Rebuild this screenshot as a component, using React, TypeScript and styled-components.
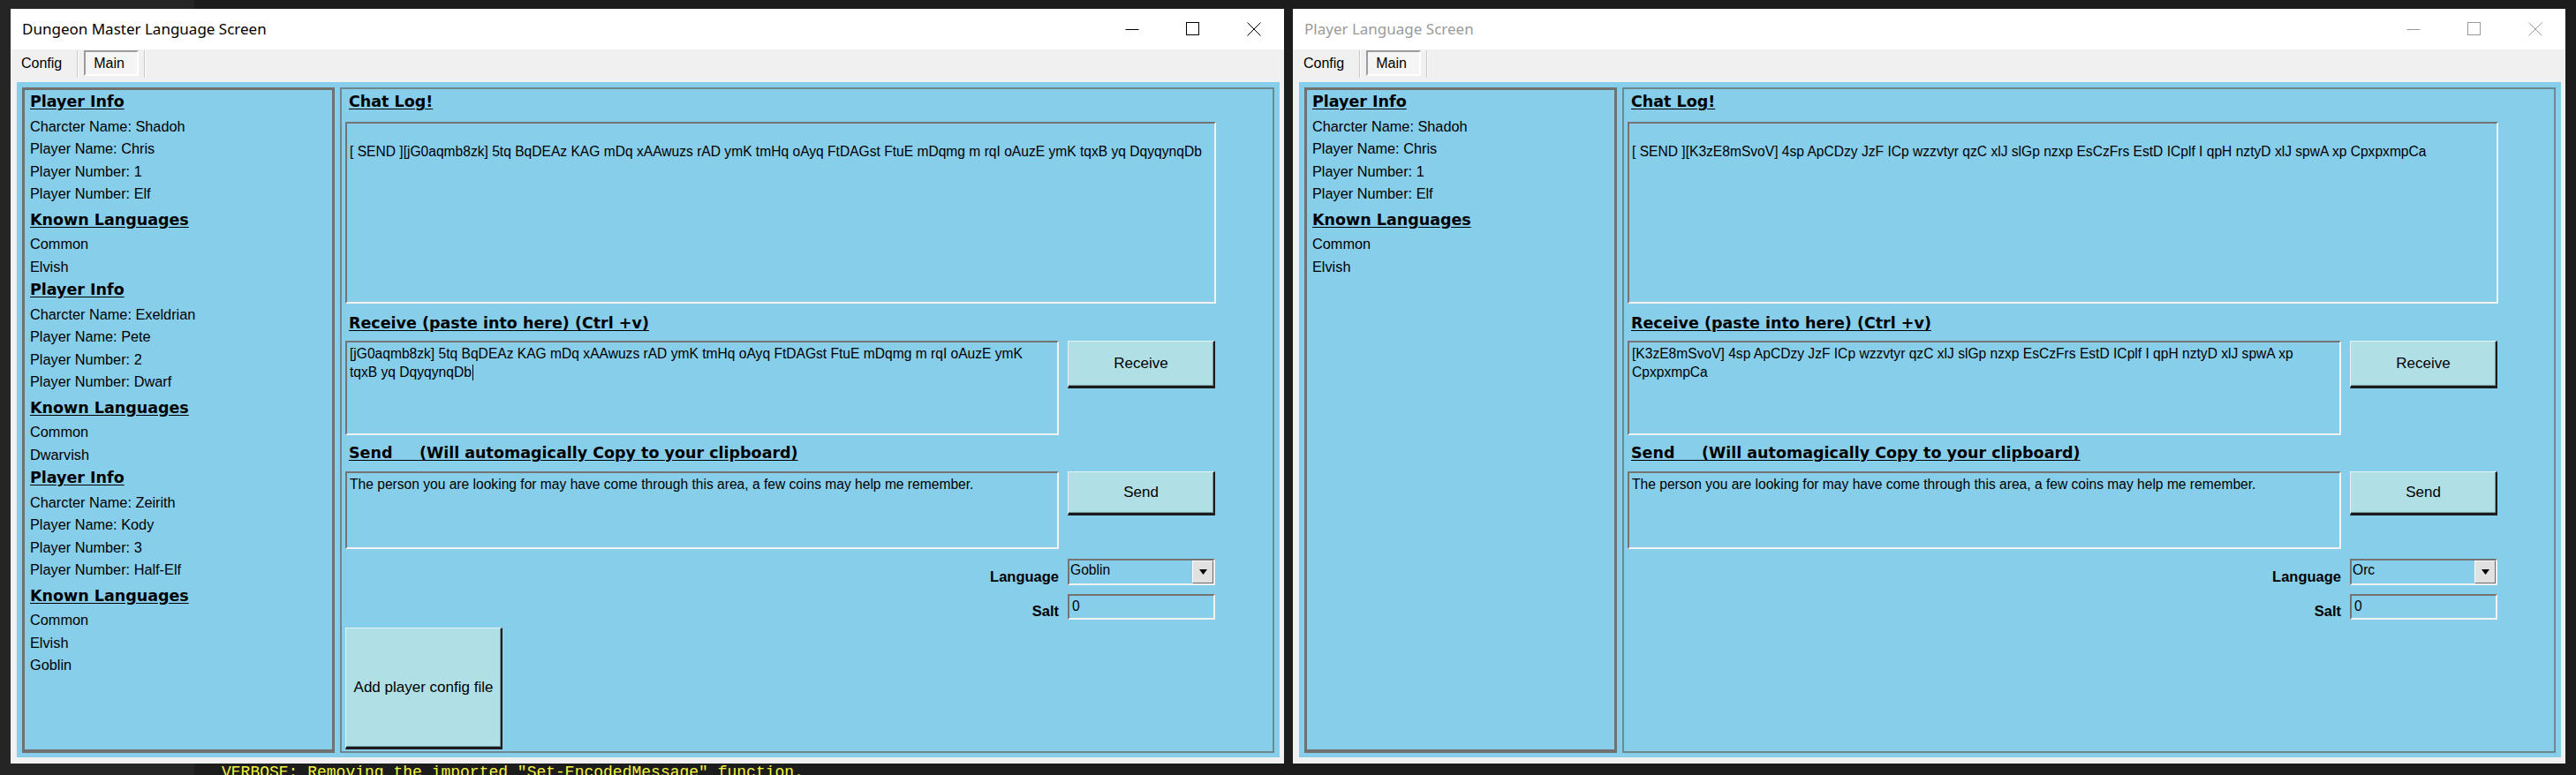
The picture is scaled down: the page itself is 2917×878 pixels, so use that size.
import styled, { createGlobalStyle, css } from 'styled-components';

interface Player {
    character: string;
    name: string;
    number: number;
    race: string;
    languages: string[];
}

interface ScreenProps {
    title: string;
    active: boolean;
    width: number;
    players: Player[];
    chat: string;
    received: string[];
    sendText: string;
    language: string;
    showCaret?: boolean;
    showAddButton?: boolean;
}

const GlobalStyle = createGlobalStyle`
    html, body {
        margin: 0;
        padding: 0;
    }
    body {
        width: 2917px;
        height: 878px;
        overflow: hidden;
        background: #1c1c1c;
        font-family: "Liberation Sans", Arial, sans-serif;
    }
`;

const Desktop = styled.div`
    width: 2917px;
    height: 878px;
    overflow: hidden;
    display: flex;
    flex-direction: column;
    background: linear-gradient(to right, #252526 0 220px, #1c1c1c 220px);
`;

const TopStrip = styled.div`
    height: 10px;
    flex-shrink: 0;
`;

const WindowRow = styled.div`
    display: flex;
    gap: 10px;
    padding-left: 12px;
    flex-shrink: 0;
`;

const Window = styled.div<{ $width: number }>`
    width: ${p => p.$width}px;
    height: 855px;
    display: flex;
    flex-direction: column;
    background: #f0f0f0;
`;

const TitleBar = styled.div<{ $active: boolean }>`
    height: 46px;
    flex-shrink: 0;
    display: flex;
    align-items: center;
    padding-left: 13px;
    background: #ffffff;
    color: ${p => (p.$active ? '#000000' : '#9a9a9a')};
    font-family: "Noto Sans", "Open Sans", sans-serif;
    font-size: 17px;
`;

const TitleText = styled.span`
    flex: 1;
    margin-top: -2px;
`;

const CaptionButton = styled.div`
    width: 69px;
    height: 46px;
    display: flex;
    align-items: center;
    justify-content: center;
`;

const MenuStrip = styled.div`
    height: 37px;
    flex-shrink: 0;
    box-sizing: border-box;
    display: flex;
    align-items: flex-start;
    padding: 1px 0 0 12px;
    font-size: 16px;
    color: #000000;
`;

const MenuItem = styled.div<{ $checked?: boolean }>`
    height: 29px;
    box-sizing: border-box;
    display: flex;
    align-items: center;
    ${p =>
        p.$checked
            ? css`
                  width: 62px;
                  padding-left: 9px;
                  border: 2px solid;
                  border-color: #9c9c9c #ffffff #ffffff #9c9c9c;
                  background: #f5f5f5;
              `
            : css`
                  padding-right: 11px;
              `}
`;

const MenuSeparator = styled.div`
    width: 1px;
    height: 31px;
    background: #c8c8c8;
    border-right: 1px solid #ffffff;
    margin: 0 6px;
`;

const Content = styled.div`
    flex: 1;
    min-height: 0;
    margin: 0 5px 7px 7px;
    padding: 6px 6px 5px 6px;
    display: flex;
    gap: 6px;
    background: #87ceeb;
`;

const PlayerPanel = styled.div`
    width: 354px;
    flex-shrink: 0;
    box-sizing: border-box;
    border: 3px solid #707070;
    border-bottom-width: 4px;
    padding-left: 6px;
    color: #000000;
`;

const PanelHeading = styled.div`
    font-family: "DejaVu Sans", Verdana, sans-serif;
    font-weight: bold;
    font-size: 17.5px;
    line-height: 25.5px;
    text-decoration: underline;
    text-underline-offset: 2px;
    margin: 4px 0 2px;

    &:first-child {
        margin-top: 1px;
    }
`;

const InfoLine = styled.div`
    font-size: 16.3px;
    line-height: 25.5px;
`;

const FormPanel = styled.div`
    flex: 1;
    box-sizing: border-box;
    border: 2px solid #6f8790;
    padding: 2px 0 0 4px;
    display: flex;
    flex-direction: column;
    align-items: flex-start;
    color: #000000;
`;

const SectionTitle = styled.div<{ $top?: number }>`
    font-family: "DejaVu Sans", Verdana, sans-serif;
    font-weight: bold;
    font-size: 17.5px;
    line-height: 24px;
    text-decoration: underline;
    text-underline-offset: 2px;
    white-space: pre;
    margin: ${p => p.$top ?? 0}px 0 0 4px;
`;

const FormRow = styled.div<{ $top: number }>`
    display: grid;
    grid-template-columns: 808px 167px;
    column-gap: 10px;
    align-items: start;
    margin-top: ${p => p.$top}px;
`;

const TextBox = styled.div<{ $height: number; $wide?: boolean }>`
    box-sizing: border-box;
    height: ${p => p.$height}px;
    width: ${p => (p.$wide ? '986px' : '100%')};
    border: 2px solid;
    border-color: #747474 #f2f2f2 #f2f2f2 #747474;
    padding: 2px 3px;
    font-size: 15.6px;
    line-height: 21px;
    white-space: pre-wrap;
    overflow: hidden;
    color: #000000;
`;

const ChatBox = styled(TextBox)`
    padding-top: 0;
`;

const Caret = styled.span`
    display: inline-block;
    width: 1px;
    height: 18px;
    margin-left: 1px;
    vertical-align: -4px;
    background: #000000;
`;

const WinButton = styled.div<{ $height: number; $width?: number }>`
    box-sizing: border-box;
    height: ${p => p.$height}px;
    width: ${p => (p.$width ? `${p.$width}px` : '100%')};
    display: flex;
    align-items: center;
    justify-content: center;
    background: #b0e0e6;
    border-style: solid;
    border-width: 1px 2px 3px 1px;
    border-color: #e2f4f6 #1c1c1c #1c1c1c #e2f4f6;
    box-shadow: inset -1px -1px 0 #6f9aa0;
    font-size: 17px;
    color: #000000;
`;

const FieldLabel = styled.div`
    justify-self: end;
    align-self: end;
    font-weight: bold;
    font-size: 16.5px;
    line-height: 20px;
`;

const ComboBox = styled.div`
    box-sizing: border-box;
    height: 30px;
    border: 2px solid;
    border-color: #747474 #f2f2f2 #f2f2f2 #747474;
    display: flex;
    align-items: center;
    font-size: 15.6px;
    padding-left: 1px;
`;

const ComboText = styled.span`
    flex: 1;
    margin-top: -4px;
`;

const DropButton = styled.div`
    box-sizing: border-box;
    width: 24px;
    height: 26px;
    display: flex;
    align-items: center;
    justify-content: center;
    background: #e1e1e1;
    border: 1px solid;
    border-color: #ffffff #696969 #696969 #ffffff;
`;

const SaltBox = styled(TextBox)`
    display: flex;
    align-items: center;
    padding-top: 0;
    padding-bottom: 2px;
`;

const ConsoleLine = styled.div`
    padding-left: 251px;
    font-family: "Liberation Mono", "DejaVu Sans Mono", monospace;
    font-size: 18px;
    line-height: 20px;
    color: #f5f543;
    white-space: pre;
`;

const MinimizeIcon = () => (
    <svg width="16" height="16" viewBox="0 0 16 16">
        <line x1="0.5" y1="8.5" x2="15.5" y2="8.5" stroke="currentColor" strokeWidth="1" />
    </svg>
);

const MaximizeIcon = () => (
    <svg width="16" height="16" viewBox="0 0 16 16">
        <rect x="0.5" y="0.5" width="14" height="14" fill="none" stroke="currentColor" strokeWidth="1" />
    </svg>
);

const CloseIcon = () => (
    <svg width="16" height="16" viewBox="0 0 16 16">
        <path d="M0.5 0.5 L15.5 15.5 M15.5 0.5 L0.5 15.5" stroke="currentColor" strokeWidth="1" fill="none" />
    </svg>
);

const DropArrow = () => (
    <svg width="9" height="6" viewBox="0 0 9 6">
        <polygon points="0,0 9,0 4.5,6" fill="#000000" />
    </svg>
);

const dmPlayers: Player[] = [
    { character: 'Shadoh', name: 'Chris', number: 1, race: 'Elf', languages: ['Common', 'Elvish'] },
    { character: 'Exeldrian', name: 'Pete', number: 2, race: 'Dwarf', languages: ['Common', 'Dwarvish'] },
    { character: 'Zeirith', name: 'Kody', number: 3, race: 'Half-Elf', languages: ['Common', 'Elvish', 'Goblin'] },
];

const sendMessage = 'The person you are looking for may have come through this area, a few coins may help me remember.';

const LanguageScreen = ({
    title,
    active,
    width,
    players,
    chat,
    received,
    sendText,
    language,
    showCaret,
    showAddButton,
}: ScreenProps) => {
    return (
        <Window $width={width}>
            <TitleBar $active={active}>
                <TitleText>{title}</TitleText>
                <CaptionButton><MinimizeIcon /></CaptionButton>
                <CaptionButton><MaximizeIcon /></CaptionButton>
                <CaptionButton><CloseIcon /></CaptionButton>
            </TitleBar>
            <MenuStrip>
                <MenuItem>Config</MenuItem>
                <MenuSeparator />
                <MenuItem $checked>Main</MenuItem>
                <MenuSeparator />
            </MenuStrip>
            <Content>
                <PlayerPanel>
                    {players.map((player) => (
                        <div key={player.number}>
                            <PanelHeading>Player Info</PanelHeading>
                            <InfoLine>Charcter Name: {player.character}</InfoLine>
                            <InfoLine>Player Name: {player.name}</InfoLine>
                            <InfoLine>Player Number: {player.number}</InfoLine>
                            <InfoLine>Player Number: {player.race}</InfoLine>
                            <PanelHeading>Known Languages</PanelHeading>
                            {player.languages.map((lang) => (
                                <InfoLine key={lang}>{lang}</InfoLine>
                            ))}
                        </div>
                    ))}
                </PlayerPanel>
                <FormPanel>
                    <SectionTitle>Chat Log!</SectionTitle>
                    <FormRow $top={11}>
                        <ChatBox $height={206} $wide>{'\n' + chat}</ChatBox>
                    </FormRow>
                    <SectionTitle $top={10}>Receive (paste into here) (Ctrl +v)</SectionTitle>
                    <FormRow $top={8}>
                        <TextBox $height={107}>
                            {received.join('\n')}
                            {showCaret && <Caret />}
                        </TextBox>
                        <WinButton $height={54}>Receive</WinButton>
                    </FormRow>
                    <SectionTitle $top={8}>{'Send     (Will automagically Copy to your clipboard)'}</SectionTitle>
                    <FormRow $top={9}>
                        <TextBox $height={88}>{sendText}</TextBox>
                        <WinButton $height={50}>Send</WinButton>
                    </FormRow>
                    <FormRow $top={11}>
                        <FieldLabel>Language</FieldLabel>
                        <ComboBox>
                            <ComboText>{language}</ComboText>
                            <DropButton><DropArrow /></DropButton>
                        </ComboBox>
                    </FormRow>
                    <FormRow $top={10}>
                        <FieldLabel>Salt</FieldLabel>
                        <SaltBox $height={29}>0</SaltBox>
                    </FormRow>
                    {showAddButton && (
                        <FormRow $top={9}>
                            <WinButton $height={138} $width={178}>Add player config file</WinButton>
                        </FormRow>
                    )}
                </FormPanel>
            </Content>
        </Window>
    );
};

const App = () => {
    return (
        <Desktop>
            <GlobalStyle />
            <TopStrip />
            <WindowRow>
                <LanguageScreen
                    title="Dungeon Master Language Screen"
                    active
                    width={1442}
                    players={dmPlayers}
                    chat="[ SEND ][jG0aqmb8zk] 5tq BqDEAz KAG mDq xAAwuzs rAD ymK tmHq oAyq FtDAGst FtuE mDqmg m rqI oAuzE ymK tqxB yq DqyqynqDb"
                    received={[
                        '[jG0aqmb8zk] 5tq BqDEAz KAG mDq xAAwuzs rAD ymK tmHq oAyq FtDAGst FtuE mDqmg m rqI oAuzE ymK',
                        'tqxB yq DqyqynqDb',
                    ]}
                    sendText={sendMessage}
                    language="Goblin"
                    showCaret
                    showAddButton
                />
                <LanguageScreen
                    title="Player Language Screen"
                    active={false}
                    width={1441}
                    players={[dmPlayers[0]]}
                    chat="[ SEND ][K3zE8mSvoV] 4sp ApCDzy JzF ICp wzzvtyr qzC xlJ slGp nzxp EsCzFrs EstD ICplf I qpH nztyD xlJ spwA xp CpxpxmpCa"
                    received={[
                        '[K3zE8mSvoV] 4sp ApCDzy JzF ICp wzzvtyr qzC xlJ slGp nzxp EsCzFrs EstD ICplf I qpH nztyD xlJ spwA xp',
                        'CpxpxmpCa',
                    ]}
                    sendText={sendMessage}
                    language="Orc"
                />
            </WindowRow>
            <ConsoleLine>VERBOSE: Removing the imported "Set-EncodedMessage" function.</ConsoleLine>
        </Desktop>
    );
};

export default App;
